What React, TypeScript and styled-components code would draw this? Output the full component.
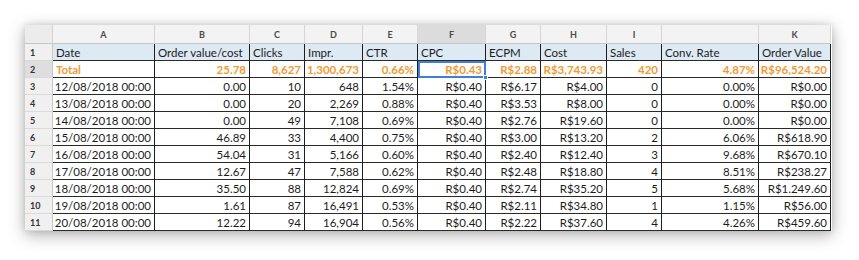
import React from "react";
import styled, { createGlobalStyle, css } from "styled-components";

const Global = createGlobalStyle`
  html, body { margin: 0; padding: 0; background: #ffffff; }
  body { font-family: "Lato", "Open Sans", sans-serif; }
`;

const Page = styled.div`
  width: 859px;
  height: 260px;
  box-sizing: border-box;
  padding: 25px 0 0 25px;
  overflow: hidden;
  background: #fff;
`;

const Sheet = styled.div`
  display: grid;
  grid-template-columns: 28px 102px 95px 55px 58px 55px 68px 55px 66px 55px 97px 72px;
  grid-template-rows: 19px repeat(11, 17px);
  width: 807px;
  background: #fff;
  box-shadow: 0 4px 16px rgba(0, 0, 0, 0.3), 0 0 6px rgba(0, 0, 0, 0.12);
  font-size: 11.5px;
  color: #1c1c1c;
`;

const Corner = styled.div`
  background: #ececec;
  border-right: 1px solid #d2d2d2;
  border-bottom: 1px solid #c6c6c6;
`;

const ColHead = styled.div<{ $sel?: boolean }>`
  box-sizing: border-box;
  display: flex;
  align-items: center;
  justify-content: center;
  background: ${(p) => (p.$sel ? "#dcdcdc" : "#f3f3f3")};
  border-right: 1px solid #d6d6d6;
  border-bottom: 1px solid #c6c6c6;
  font-size: 9px;
  font-weight: 700;
  color: #4a4a4a;
`;

const RowNum = styled.div<{ $sel?: boolean }>`
  box-sizing: border-box;
  display: flex;
  align-items: center;
  padding-left: 5px;
  background: ${(p) => (p.$sel ? "#dedede" : "#f0f0f0")};
  border-right: 1px solid #c8c8c8;
  border-bottom: 1px solid #dadada;
  font-size: 9px;
  font-weight: 700;
  color: #333;
`;

const Cell = styled.div<{
  $align?: "left" | "right";
  $head?: boolean;
  $total?: boolean;
  $sel?: boolean;
}>`
  position: relative;
  box-sizing: border-box;
  display: flex;
  align-items: center;
  justify-content: ${(p) => (p.$align === "left" ? "flex-start" : "flex-end")};
  padding: 0 3px;
  white-space: nowrap;
  overflow: visible;
  border-right: 1.5px solid #1e1e1e;
  border-bottom: 1.5px solid #2a2a2a;
  background: ${(p) => (p.$head ? "#dde9f3" : "#fff")};
  ${(p) =>
    p.$total &&
    css`
      color: #f29a35;
      font-weight: 700;
    `}
  ${(p) =>
    p.$sel &&
    css`
      outline: 2px solid #3f7fd6;
      outline-offset: -2px;
    `}
`;

const Handle = styled.span`
  position: absolute;
  right: -3px;
  bottom: -3px;
  width: 5px;
  height: 5px;
  background: #3f7fd6;
  border: 1px solid #fff;
  box-sizing: border-box;
  z-index: 2;
`;

const letters = ["A", "B", "C", "D", "E", "F", "G", "H", "I", "", "K"];
const headers = [
  "Date",
  "Order value/cost",
  "Clicks",
  "Impr.",
  "CTR",
  "CPC",
  "ECPM",
  "Cost",
  "Sales",
  "Conv. Rate",
  "Order Value",
];
const total = [
  "Total",
  "25.78",
  "8,627",
  "1,300,673",
  "0.66%",
  "R$0.43",
  "R$2.88",
  "R$3,743.93",
  "420",
  "4.87%",
  "R$96,524.20",
];
const rows: string[][] = [
  ["12/08/2018 00:00", "0.00", "10", "648", "1.54%", "R$0.40", "R$6.17", "R$4.00", "0", "0.00%", "R$0.00"],
  ["13/08/2018 00:00", "0.00", "20", "2,269", "0.88%", "R$0.40", "R$3.53", "R$8.00", "0", "0.00%", "R$0.00"],
  ["14/08/2018 00:00", "0.00", "49", "7,108", "0.69%", "R$0.40", "R$2.76", "R$19.60", "0", "0.00%", "R$0.00"],
  ["15/08/2018 00:00", "46.89", "33", "4,400", "0.75%", "R$0.40", "R$3.00", "R$13.20", "2", "6.06%", "R$618.90"],
  ["16/08/2018 00:00", "54.04", "31", "5,166", "0.60%", "R$0.40", "R$2.40", "R$12.40", "3", "9.68%", "R$670.10"],
  ["17/08/2018 00:00", "12.67", "47", "7,588", "0.62%", "R$0.40", "R$2.48", "R$18.80", "4", "8.51%", "R$238.27"],
  ["18/08/2018 00:00", "35.50", "88", "12,824", "0.69%", "R$0.40", "R$2.74", "R$35.20", "5", "5.68%", "R$1.249.60"],
  ["19/08/2018 00:00", "1.61", "87", "16,491", "0.53%", "R$0.40", "R$2.11", "R$34.80", "1", "1.15%", "R$56.00"],
  ["20/08/2018 00:00", "12.22", "94", "16,904", "0.56%", "R$0.40", "R$2.22", "R$37.60", "4", "4.26%", "R$459.60"],
];

export default function App() {
  return (
    <>
      <Global />
      <Page>
        <Sheet>
          <Corner />
          {letters.map((l, i) => (
            <ColHead key={"h" + i} $sel={i === 5}>
              {l}
            </ColHead>
          ))}

          <RowNum>1</RowNum>
          {headers.map((h, i) => (
            <Cell key={"t" + i} $head $align="left">
              {h}
            </Cell>
          ))}

          <RowNum $sel>2</RowNum>
          {total.map((t, i) => (
            <Cell key={"s" + i} $total $align={i === 0 ? "left" : "right"} $sel={i === 5}>
              {t}
              {i === 5 && <Handle />}
            </Cell>
          ))}

          {rows.map((r, ri) => (
            <React.Fragment key={"r" + ri}>
              <RowNum>{ri + 3}</RowNum>
              {r.map((v, ci) => (
                <Cell key={ci} $align="right">
                  {v}
                </Cell>
              ))}
            </React.Fragment>
          ))}
        </Sheet>
      </Page>
    </>
  );
}
